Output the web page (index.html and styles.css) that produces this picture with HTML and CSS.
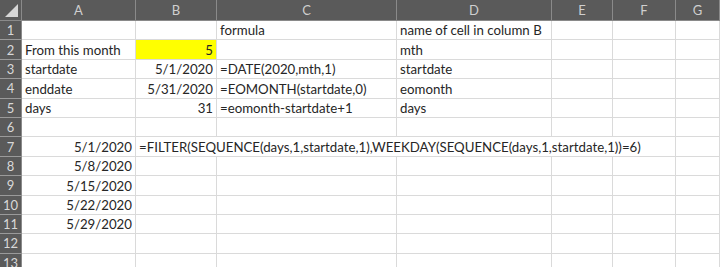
FILE: index.html
```html
<!DOCTYPE html>
<html>
<head>
<meta charset="utf-8">
<link rel="stylesheet" href="styles.css">
</head>
<body>
<div class="sheet">
  <div class="corner"><span class="tri"></span></div>
  <div class="ch">A</div><div class="ch">B</div><div class="ch">C</div><div class="ch">D</div><div class="ch">E</div><div class="ch">F</div><div class="ch">G</div>

  <div class="rh">1</div>
  <div class="c"></div><div class="c"></div><div class="c">formula</div><div class="c">name of cell in column B</div><div class="c"></div><div class="c"></div><div class="c"></div>

  <div class="rh">2</div>
  <div class="c">From this month</div><div class="c num yellow">5</div><div class="c"></div><div class="c">mth</div><div class="c"></div><div class="c"></div><div class="c"></div>

  <div class="rh">3</div>
  <div class="c">startdate</div><div class="c num">5/1/2020</div><div class="c">=DATE(2020,mth,1)</div><div class="c">startdate</div><div class="c"></div><div class="c"></div><div class="c"></div>

  <div class="rh">4</div>
  <div class="c">enddate</div><div class="c num">5/31/2020</div><div class="c">=EOMONTH(startdate,0)</div><div class="c">eomonth</div><div class="c"></div><div class="c"></div><div class="c"></div>

  <div class="rh">5</div>
  <div class="c">days</div><div class="c num">31</div><div class="c">=eomonth-startdate+1</div><div class="c">days</div><div class="c"></div><div class="c"></div><div class="c"></div>

  <div class="rh">6</div>
  <div class="c"></div><div class="c"></div><div class="c"></div><div class="c"></div><div class="c"></div><div class="c"></div><div class="c"></div>

  <div class="rh">7</div>
  <div class="c num">5/1/2020</div><div class="c span5">=FILTER(SEQUENCE(days,1,startdate,1),WEEKDAY(SEQUENCE(days,1,startdate,1))=6)</div><div class="c"></div>

  <div class="rh">8</div>
  <div class="c num">5/8/2020</div><div class="c"></div><div class="c"></div><div class="c"></div><div class="c"></div><div class="c"></div><div class="c"></div>

  <div class="rh">9</div>
  <div class="c num">5/15/2020</div><div class="c"></div><div class="c"></div><div class="c"></div><div class="c"></div><div class="c"></div><div class="c"></div>

  <div class="rh">10</div>
  <div class="c num">5/22/2020</div><div class="c"></div><div class="c"></div><div class="c"></div><div class="c"></div><div class="c"></div><div class="c"></div>

  <div class="rh">11</div>
  <div class="c num">5/29/2020</div><div class="c"></div><div class="c"></div><div class="c"></div><div class="c"></div><div class="c"></div><div class="c"></div>

  <div class="rh">12</div>
  <div class="c"></div><div class="c"></div><div class="c"></div><div class="c"></div><div class="c"></div><div class="c"></div><div class="c"></div>

  <div class="rh">13</div>
  <div class="c"></div><div class="c"></div><div class="c"></div><div class="c"></div><div class="c"></div><div class="c"></div><div class="c"></div>
</div>
</body>
</html>
```

FILE: styles.css
```css
html, body {
  margin: 0;
  padding: 0;
  background: #ffffff;
  overflow: hidden;
}

.sheet {
  display: grid;
  grid-template-columns: 22px 114px 81px 180px 155px 61px 63px 44px;
  grid-template-rows: 21px repeat(13, 19.4px);
  font-family: Lato, "Liberation Sans", sans-serif;
  font-size: 13.25px;
  color: #262626;
}

.corner {
  background: #5a5a5a;
  border-right: 1px solid #8a8a8a;
  border-bottom: 1px solid #8a8a8a;
  box-sizing: border-box;
  position: relative;
}

.tri {
  position: absolute;
  right: 3px;
  bottom: 3px;
  width: 0;
  height: 0;
  border-left: 13px solid transparent;
  border-bottom: 13px solid #d6d6d6;
}

.ch {
  background: #5a5a5a;
  color: #cfcfcf;
  border-right: 1px solid #8a8a8a;
  border-bottom: 1px solid #8a8a8a;
  box-sizing: border-box;
  display: flex;
  align-items: center;
  justify-content: center;
  font-size: 13px;
}

.rh {
  background: #5a5a5a;
  color: #d8d8d8;
  border-bottom: 1px solid #9a9a9a;
  border-right: 1px solid #8a8a8a;
  box-sizing: border-box;
  display: flex;
  align-items: center;
  justify-content: center;
  font-size: 13px;
}

.c {
  border-right: 1px solid #dadada;
  border-bottom: 1px solid #dadada;
  box-sizing: border-box;
  display: flex;
  align-items: flex-end;
  padding: 0 3px 1px 3px;
  line-height: 16px;
  white-space: nowrap;
  overflow: visible;
}

.num {
  justify-content: flex-end;
}

.yellow {
  background: #ffff00;
}

.span5 {
  grid-column: span 5;
}
```
